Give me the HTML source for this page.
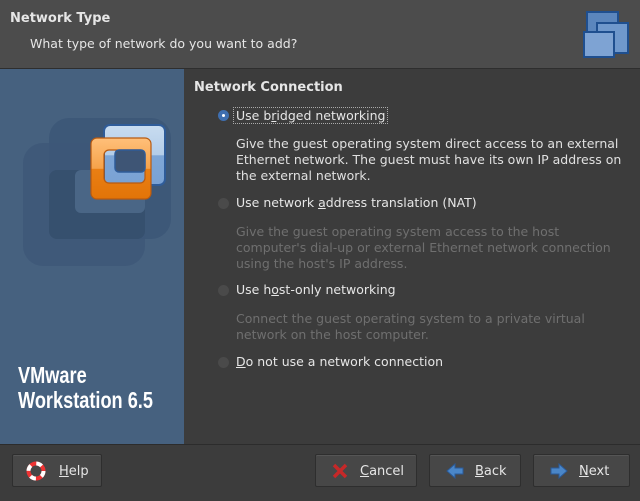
<!DOCTYPE html>
<html><head><style>
body{margin:0;width:640px;height:500px;background:#3c3c3c;font-family:"DejaVu Sans",sans-serif;font-size:12.5px;color:#e6e6e6;position:relative;overflow:hidden}
.a{position:absolute;white-space:nowrap}
.hdr{position:absolute;left:0;top:0;width:640px;height:68px;background:#4c4c4c;border-bottom:1px solid #2e2e2e}
.left{position:absolute;left:0;top:69px;width:184px;height:375px;background:#46617f}
.foot{position:absolute;left:0;top:444px;width:640px;height:56px;background:#3c3c3c;border-top:1px solid #2c2c2c}
.btn{position:absolute;top:454px;height:31px;background:#474747;border:1px solid #2e2e2e;border-radius:2px;box-shadow:inset 0 1px 0 #555}
.btn span{position:absolute;top:9px;font-size:13px}
.r{position:absolute;width:11px;height:11px;border-radius:50%;background:#4a4a4a}
.d{color:#e0e0e0;line-height:16px}
.g{color:#6f6f6f;line-height:16px}
u{text-decoration:underline}
</style></head><body>
<div class="hdr"></div>
<div class="a" style="left:10px;top:11px;font-weight:bold;font-size:13px">Network Type</div>
<div class="a" style="left:30px;top:36px">What type of network do you want to add?</div>
<svg class="a" style="left:580px;top:9px" width="52" height="50">
<rect x="7" y="3" width="31" height="32" fill="#5b86bd" stroke="#1f4f8f" stroke-width="2"/>
<rect x="17" y="14" width="31" height="30" fill="#6f98cc" stroke="#1f4f8f" stroke-width="2"/>
<rect x="4" y="23" width="30" height="25" fill="#7ea3d3" stroke="#1f4f8f" stroke-width="2"/>
</svg>
<div class="left"></div>
<svg class="a" style="left:0;top:0" width="184" height="300">
<defs><linearGradient id="o" x1="0" y1="0" x2="0" y2="1"><stop offset="0" stop-color="#ffc07a"/><stop offset=".5" stop-color="#f6a24a"/><stop offset=".51" stop-color="#ea7f14"/><stop offset="1" stop-color="#e27408"/></linearGradient>
<linearGradient id="b" x1="0" y1="0" x2="0" y2="1"><stop offset="0" stop-color="#c8dcf0"/><stop offset=".5" stop-color="#b4cde8"/><stop offset=".51" stop-color="#7ea6d6"/><stop offset="1" stop-color="#7aa2d4"/></linearGradient></defs>
<rect x="49" y="118" width="122" height="121" rx="20" fill="#3d5878"/>
<rect x="23" y="143" width="122" height="123" rx="20" fill="#3d5878" opacity=".8"/>
<rect x="49" y="170" width="96" height="69" rx="8" fill="#36506e"/>
<rect x="75" y="170" width="70" height="43" rx="6" fill="#4a6686"/>
<rect x="104" y="125" width="61" height="60" rx="6" fill="url(#b)" stroke="#2f5c99" stroke-width="2"/>
<path d="M97 138h48a6 6 0 0 1 6 6v49a6 6 0 0 1-6 6h-48a6 6 0 0 1-6-6v-49a6 6 0 0 1 6-6zM109 150a5 5 0 0 0-5 5v23a5 5 0 0 0 5 5h31a5 5 0 0 0 5-5v-23a5 5 0 0 0-5-5z" fill="url(#o)" fill-rule="evenodd" stroke="#b85a10" stroke-width="1.2"/>
<rect x="115" y="150" width="30" height="22" rx="4" fill="#3e5575" stroke="#2f5c99" stroke-width="1.5"/>
</svg>
<div class="a" style="left:18px;top:363px;font-size:23px;line-height:25px;font-weight:bold;color:#fff;font-family:'Liberation Sans Narrow','Liberation Sans',sans-serif;transform:scaleX(.79);transform-origin:left">VMware<br>Workstation 6.5</div>
<div class="a" style="left:194px;top:80px;font-weight:bold;font-size:13px">Network Connection</div>
<div class="r" style="left:218px;top:110px;background:#3f6fb0"><div style="position:absolute;left:4px;top:4px;width:3px;height:3px;background:#fff;border-radius:50%"></div></div>
<div class="a" style="left:233px;top:107px;border:1px dotted #aaa;padding:0 2px">Use b<u>r</u>idged networking</div>
<div class="a d" style="left:236px;top:136px">Give the guest operating system direct access to an external<br>Ethernet network. The guest must have its own IP address on<br>the external network.</div>
<div class="r" style="left:218px;top:198px"></div>
<div class="a" style="left:236px;top:195px">Use network <u>a</u>ddress translation (NAT)</div>
<div class="a g" style="left:236px;top:224px">Give the guest operating system access to the host<br>computer's dial-up or external Ethernet network connection<br>using the host's IP address.</div>
<div class="r" style="left:218px;top:285px"></div>
<div class="a" style="left:236px;top:282px">Use h<u>o</u>st-only networking</div>
<div class="a g" style="left:236px;top:311px">Connect the guest operating system to a private virtual<br>network on the host computer.</div>
<div class="r" style="left:218px;top:357px"></div>
<div class="a" style="left:236px;top:354px"><u>D</u>o not use a network connection</div>
<div class="foot"></div>
<div class="btn" style="left:12px;width:88px"><svg class="a" style="left:13px;top:6px" width="20" height="20"><circle cx="10" cy="10" r="7.5" fill="none" stroke="#e33" stroke-width="4"/><circle cx="10" cy="10" r="7.5" fill="none" stroke="#fff" stroke-width="4" stroke-dasharray="5.9 5.9"/></svg><span style="left:46px"><u>H</u>elp</span></div>
<div class="btn" style="left:315px;width:100px"><svg class="a" style="left:16px;top:8px" width="16" height="16"><path d="M2 2L14 14M14 2L2 14" stroke="#c62828" stroke-width="3.5"/></svg><span style="left:44px"><u>C</u>ancel</span></div>
<div class="btn" style="left:429px;width:90px"><svg class="a" style="left:16px;top:8px" width="18" height="16"><path d="M1 8L9 1V5H17V11H9V15Z" fill="#4a86c8" stroke="#2a5a98"/></svg><span style="left:45px"><u>B</u>ack</span></div>
<div class="btn" style="left:533px;width:95px"><svg class="a" style="left:16px;top:8px" width="18" height="16"><path d="M17 8L9 1V5H1V11H9V15Z" fill="#4a86c8" stroke="#2a5a98"/></svg><span style="left:45px"><u>N</u>ext</span></div>
</body></html>
